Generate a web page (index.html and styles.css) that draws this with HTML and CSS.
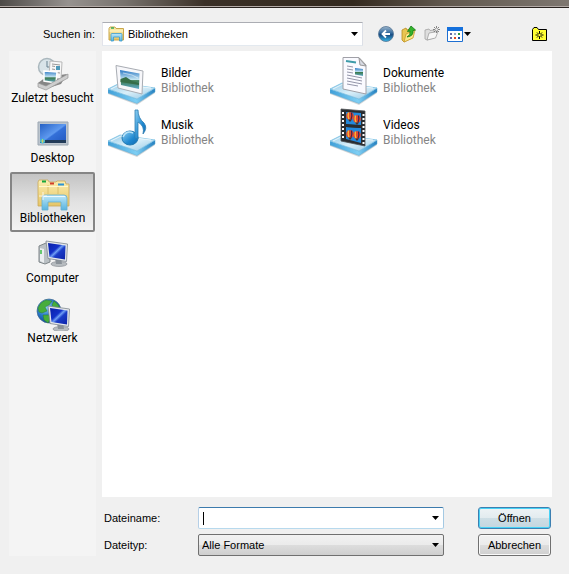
FILE: index.html
```html
<!DOCTYPE html>
<html lang="de">
<head>
<meta charset="utf-8">
<title>Öffnen</title>
<link rel="stylesheet" href="styles.css">
</head>
<body>
<svg class="defs" aria-hidden="true">
  <defs>
    <linearGradient id="plate" x1="0" y1="0" x2="1" y2="1"><stop offset="0" stop-color="#8fc9e8"/><stop offset=".5" stop-color="#d9eff9"/><stop offset="1" stop-color="#92c6e4"/></linearGradient>
    <linearGradient id="edge" x1="0" x2="1"><stop offset="0" stop-color="#3f9fd8"/><stop offset=".6" stop-color="#7fcff4"/><stop offset="1" stop-color="#2580c0"/></linearGradient>
    <linearGradient id="sky" x1="0" y1="0" x2="0" y2="1"><stop offset="0" stop-color="#2b78c4"/><stop offset=".5" stop-color="#c5e5f2"/><stop offset=".56" stop-color="#3d7b50"/><stop offset="1" stop-color="#5faac9"/></linearGradient>
    <linearGradient id="folder" x1="0" y1="0" x2="0" y2="1"><stop offset="0" stop-color="#fbeeb0"/><stop offset="1" stop-color="#e6c566"/></linearGradient>
    <linearGradient id="note" x1="0" y1="0" x2="1" y2="1"><stop offset="0" stop-color="#8fd0f2"/><stop offset=".6" stop-color="#1f88d0"/><stop offset="1" stop-color="#1169b0"/></linearGradient>
    <linearGradient id="screen" x1="0" y1="0" x2="1" y2="1"><stop offset="0" stop-color="#0a1fa8"/><stop offset=".4" stop-color="#1230c8"/><stop offset=".5" stop-color="#6f9ef4"/><stop offset=".6" stop-color="#1a3cc8"/><stop offset="1" stop-color="#0d22a8"/></linearGradient>
    <linearGradient id="desk" x1="0" y1="0" x2="1" y2="1"><stop offset="0" stop-color="#2560c4"/><stop offset=".5" stop-color="#5f9af0"/><stop offset=".55" stop-color="#3470d8"/><stop offset="1" stop-color="#2258c0"/></linearGradient>
    <linearGradient id="glass" x1="0" y1="0" x2="0" y2="1"><stop offset="0" stop-color="#bfe8f8"/><stop offset="1" stop-color="#57b3df"/></linearGradient>
    <radialGradient id="globe" cx=".35" cy=".3" r=".8"><stop offset="0" stop-color="#9fdcf8"/><stop offset=".5" stop-color="#2878c8"/><stop offset="1" stop-color="#0b3c88"/></radialGradient>
    <linearGradient id="back" x1="0" y1="0" x2="0" y2="1"><stop offset="0" stop-color="#9eb6cc"/><stop offset=".45" stop-color="#2f689c"/><stop offset=".55" stop-color="#174a80"/><stop offset="1" stop-color="#38b8ea"/></linearGradient>
    <g id="platform">
      <path d="M0 35 29 46 47 34V37L29 49 0 38Z" fill="#8b8f92" opacity=".35"/>
      <path d="M0 33 29 43 47 32V36L29 47.500 0 37Z" fill="url(#edge)" stroke="#5fa9d0" stroke-width=".5"/>
      <path d="M0 33 12 27 47 32 29 43Z" fill="url(#plate)" stroke="#79bfe2" stroke-width=".8"/>
      <path d="M3 33 13 28 43 32" fill="none" stroke="#fff" opacity=".7"/>
    </g>
    <g id="monitor">
      <ellipse cx="14" cy="23" rx="8" ry="2.500" fill="#b7bcc0" stroke="#81878d" stroke-width=".6"/>
      <path d="M10 17h6l1 6h-6z" fill="#8b9299"/>
      <path d="M1 0 22.500 3 21.500 20.500 3 17.500Z" fill="#e6e9ec" stroke="#7d868f" stroke-width=".8"/>
      <path d="M3 2 20.500 4.500 20 18.500 4.500 16Z" fill="url(#screen)"/>
    </g>
    <g id="balloon"><circle r="3.800" fill="#e8482a"/><path d="M-1.500-3.500Q-2.500 0-1 3.500" stroke="#f7bd3a" stroke-width="1.300" fill="none"/><path d="M1.500-3.500Q2.500 0 1 3.500" stroke="#3b2350" stroke-width="1.200" fill="none"/><path d="M-2 3.500 0 6 2 3.500Z" fill="#522d24"/></g>
  </defs>
</svg>

<div class="frame-edge"></div>
<main class="dialog">
  <header class="lookin">
    <label class="lookin-label" for="folder-select">Suchen in:</label>
    <div class="combo combo-folder">
      <svg class="combo-icon" width="17" height="16" viewBox="0 0 17 16" aria-hidden="true"><path d="M1 2.500 2 1H7L8 2.500H15.500V14H1Z" fill="url(#folder)" stroke="#c9a64a"/><path d="M3 2H6" stroke="#35a853" stroke-width="1.500"/><path d="M1.500 5H15" stroke="#fff6cb"/><path d="M3 15V8.500Q3 7.500 4 7.500H13Q14 7.500 14 8.500V15H11.500V11H5.500V15Z" fill="url(#glass)" stroke="#3a9cd0" stroke-width=".8"/></svg>
      <select id="folder-select"><option>Bibliotheken</option></select>
      <svg class="arrow" width="7" height="4" viewBox="0 0 7 4" aria-hidden="true"><path d="M0 0H7L3.500 4Z"/></svg>
    </div>
    <nav class="toolbar">
      <button type="button" aria-label="Zurück"><svg width="16" height="16" viewBox="0 0 16 16"><circle cx="8" cy="8" r="7.500" fill="url(#back)" stroke="#547392" stroke-width=".8"/><path d="M12 8H5M8 4.500 4.500 8 8 11.500" fill="none" stroke="#fff" stroke-width="1.800"/></svg></button>
      <button type="button" aria-label="Übergeordneter Ordner"><svg width="16" height="18" viewBox="0 0 16 18"><path d="M1 5 5 3 6 5 11 3V13L3 17 1 15Z" fill="#e9c552" stroke="#b88b20" stroke-width=".8"/><path d="M3 17 5 9 14 5 12 13Z" fill="#fbe88b" stroke="#c99c2b" stroke-width=".8"/><path d="M6 12Q10 10 9 6L6.500 6.500 10 1 14.500 5 12 5.500Q13 11 6 12Z" fill="#35b52d" stroke="#147b17" stroke-width=".8"/></svg></button>
      <button type="button" aria-label="Neuer Ordner"><svg width="16" height="16" viewBox="0 0 16 16"><path d="M1 4 5 3 6 4.500 10 4V12L3 14 1 13Z" fill="#dedede" stroke="#a2a2a2" stroke-width=".8"/><path d="M3 14 5 7 14 5.500 11.500 12Z" fill="#f7f7f7" stroke="#a0a0a0" stroke-width=".8"/><path d="M12.500 0V7M9 3.500H16M10 1 15 6M15 1 10 6" stroke="#777" stroke-width=".9"/><circle cx="12.500" cy="3.500" r="1.300" fill="#eee"/></svg></button>
      <button class="views" type="button" aria-label="Ansicht"><svg width="16" height="15" viewBox="0 0 16 15"><path d="M.5.500H15.500V14.500H.5Z" fill="#fff" stroke="#1d6fd2"/><path d="M0 0H16V4H0Z" fill="#1570dc"/><path d="M3 6h2v2H3zM3 10h2v2H3z" fill="#666aa5"/><path d="M7 6h2v2H7z" fill="#8fa5c9"/><path d="M11 6h2v2H11z" fill="#2d9a3b"/><path d="M7 10h2v2H7z" fill="#e44a20"/><path d="M11 10h2v2H11z" fill="#174b9e"/></svg><svg width="7" height="4" viewBox="0 0 7 4"><path d="M0 0H7L3.500 4Z"/></svg></button>
    </nav>
    <button class="create" type="button" aria-label="Ordner erstellen"><svg width="15" height="14" viewBox="0 0 15 14"><path d="M.5 13.500V2.500L2 .5H5L6.500 2.500H14.500V13.500Z" fill="#ff3" stroke="#000"/><path d="M7.500 4V12M3.500 8H11.500M5 5.500 10 10.500M10 5.500 5 10.500" stroke="#000"/><circle cx="7.500" cy="8" r="1.200" fill="#ff3"/></svg></button>
  </header>

  <div class="content">
    <nav class="places">
      <button class="place" type="button"><svg width="34" height="34" viewBox="0 0 34 34"><circle cx="11" cy="10" r="8.500" fill="#d8e4e9" stroke="#aab7bd" stroke-width="1.500"/><path d="M11 4V10H15" fill="none" stroke="#668190"/><path d="M2 26 10 20 31 17 25 27 9 32Z" fill="#858585"/><path d="M14 4 26 5 25 22 13 20Z" fill="#f7f7f7" stroke="#b8b8b8"/><path d="M16 7 24 8M16 9 19 9.500M16 12 19 12.500M16 15 24 16" stroke="#999"/><path d="M20 9h4v4h-4z" fill="#4f99b9"/><path d="M8 14 21 15 20 26 8 24Z" fill="url(#sky)" stroke="#fff" stroke-width="1.500"/><path d="M2 26 10 29 32 17V21L10 33 2 30Z" fill="#cecece" stroke="#969696" stroke-width=".7"/></svg><span>Zuletzt besucht</span></button>
      <button class="place" type="button"><svg width="34" height="34" viewBox="0 0 34 34"><path d="M2 5H32V28H2Z" fill="#bcc5ce" stroke="#9ca7b2"/><path d="M4 7H30V26H4Z" fill="url(#desk)"/><path d="M4 23H30V26H4Z" fill="#223b58"/><circle cx="6.500" cy="24" r="2.500" fill="#36b6df"/><path d="M6.500 22V26M4.500 24H8.500" stroke="#f0d54b" stroke-width=".7"/></svg><span>Desktop</span></button>
      <button class="place selected" type="button" aria-pressed="true"><svg width="34" height="34" viewBox="0 0 34 34"><path d="M2 5 3 3H12L13 5H20L21 4H29L30 7H33V29H2Z" fill="url(#folder)" stroke="#c9a85a" stroke-width=".8"/><path d="M6 4.500H10" stroke="#17a83d" stroke-width="2"/><path d="M14 6.500H18" stroke="#d23e29" stroke-width="2"/><path d="M22 7.500H28" stroke="#2c93d5" stroke-width="2"/><path d="M12 8V17M22 9.500V17" fill="none" stroke="#d4b863" stroke-width=".8"/><path d="M3 9.500H32" stroke="#fff8ce"/><path d="M6 33V21Q6 18 9 18H28Q31 18 31 21V33H25V25H12V33Z" fill="url(#glass)" stroke="#65afd0" stroke-width=".8"/><path d="M8 19.500H29" stroke="#edfaff"/><path d="M7 15V23M3 19H11" stroke="#fff" opacity=".8"/></svg><span>Bibliotheken</span></button>
      <button class="place" type="button"><svg width="34" height="34" viewBox="0 0 34 34"><path d="M3 9 10 6 14 8V25L9 27 3 25Z" fill="#bac0c4" stroke="#7e8589"/><path d="M4 11 8 12V26L4 24Z" fill="#ebeef0"/><path d="M5 13V17" stroke="#3cbd47" stroke-width="1.500"/><use href="#monitor" x="9" y="4"/></svg><span>Computer</span></button>
      <button class="place" type="button"><svg width="34" height="34" viewBox="0 0 34 34"><circle cx="13" cy="14" r="12" fill="url(#globe)" stroke="#43698e" stroke-width=".7"/><path d="M2 11Q4 5 10 3L16 4 13 8 9 10 11 14 6 16 3 15ZM7 18 13 18 15 21 12 26 8 23ZM18 4Q23 7 24 12L19 12 16 8Z" fill="#47ad3c" stroke="#247b36" stroke-width=".5"/><use href="#monitor" x="11" y="9"/></svg><span>Netzwerk</span></button>
    </nav>

    <section class="pane">
      <ul class="files">
        <li class="file"><svg width="48" height="52" viewBox="0 0 48 52" aria-hidden="true"><use href="#platform"/><path d="M8 9.500 35 15 34 38 10 32Z" fill="#f7f7fa" stroke="#a8acb3"/><path d="M12 14 31.500 17.500 31 33 13 29Z" fill="url(#sky)"/><path d="M12.500 23 18 21 24 25 31 27V29L12.500 26Z" fill="#366e48"/><path d="M15 17 24 19 30 22" stroke="#fff" opacity=".5" fill="none"/></svg><div><div>Bilder</div><div class="kind">Bibliothek</div></div></li>
        <li class="file"><svg width="48" height="52" viewBox="0 0 48 52" aria-hidden="true"><use href="#platform"/><path d="M13 1.500 29 1.500 36 9 36 38 13 33Z" fill="#fafaff" stroke="#a0a0a7"/><path d="M29 2 30 9 36 10Z" fill="#d8dbe4" stroke="#999"/><path d="M16 5 26 6.500" stroke="#3d9ba9" stroke-width="2"/><path d="M17 10 23 11M17 13 23 14M17 16 23 17M17 19 32 22M17 22 32 25M17 25 32 28M17 28 28 30" stroke="#9496aa"/><path d="M25 12 33 13V20L25 18.500Z" fill="url(#sky)"/></svg><div><div>Dokumente</div><div class="kind">Bibliothek</div></div></li>
        <li class="file"><svg width="48" height="52" viewBox="0 0 48 52" aria-hidden="true"><use href="#platform"/><ellipse cx="22" cy="30" rx="8" ry="7" fill="url(#note)" stroke="#2379b1"/><path d="M27 30V2H30Q30 10 36 15 40 20 35 26 37 18 30 14V31Z" fill="url(#note)" stroke="#2e7eb1" stroke-width=".8"/><path d="M15 29Q18 22 25 25" fill="none" stroke="#b9e3f8" stroke-width="1.500"/></svg><div><div>Musik</div><div class="kind">Bibliothek</div></div></li>
        <li class="file"><svg width="48" height="52" viewBox="0 0 48 52" aria-hidden="true"><use href="#platform"/><path d="M11 1 35 3 35 38 11 33Z" fill="#292c30" stroke="#4c5053" stroke-width=".8"/><path d="M16 4 31 5 31 17 16 16ZM16 19 31 20 31 35 16 31Z" fill="#2389db"/><use href="#balloon" x="20" y="8"/><use href="#balloon" x="27" y="11"/><use href="#balloon" x="20" y="26"/><use href="#balloon" x="27" y="27"/><path d="M16 16.500 31 17.500V20L16 19Z" fill="#292c30"/><path d="M13 4V32M33.500 6V36" stroke="#fff" stroke-width="2" stroke-dasharray="2 2"/></svg><div><div>Videos</div><div class="kind">Bibliothek</div></div></li>
      </ul>
      <form class="fields">
        <label for="filename">Dateiname:</label>
        <div class="combo combo-name"><input id="filename" type="text" autocomplete="off"><svg class="arrow" width="7" height="4" viewBox="0 0 7 4" aria-hidden="true"><path d="M0 0H7L3.500 4Z"/></svg></div>
        <button class="action default" type="submit">Öffnen</button>
        <label for="filetype">Dateityp:</label>
        <div class="combo combo-type"><select id="filetype"><option>Alle Formate</option></select><svg class="arrow" width="7" height="4" viewBox="0 0 7 4" aria-hidden="true"><path d="M0 0H7L3.500 4Z"/></svg></div>
        <button class="action" type="button">Abbrechen</button>
      </form>
    </section>
  </div>
</main>
</body>
</html>
```
FILE: styles.css
```css
* { box-sizing: border-box; }

body {
  margin: 0;
  min-height: 100vh;
  display: flex;
  flex-direction: column;
  background: #f0f0f0;
  color: #000;
  font: 11px/16px "Liberation Sans", Arial, sans-serif;
}

button, input, select { font: inherit; color: inherit; }
button { padding: 0; border: 0; background: none; }
svg { display: block; flex: none; }
.defs { position: absolute; width: 0; height: 0; }

.frame-edge {
  height: 8px;
  border-bottom: 1px solid #292320;
  background:
    linear-gradient(#b3aaa6, #b3aaa6) bottom / 100% 1px no-repeat,
    linear-gradient(90deg, #4d4a47, #96928f 12%, #77726d 22%, #3a3027 36%, #33291e 62%, #60574d 78%, #7e7770);
}

.dialog {
  flex: 1;
  display: flex;
  flex-direction: column;
  padding: 14px 17px 18px 9px;
}

.lookin { display: flex; align-items: center; margin-bottom: 5px; padding-right: 5px; }
.lookin-label { width: 86px; margin-right: 7px; text-align: right; }

.combo { display: grid; align-items: center; border: 1px solid; }
.combo > * { grid-row: 1; grid-column: 1; }
.combo select, .combo input {
  width: 100%;
  height: 100%;
  border: 0;
  padding: 0 20px 0 3px;
  background: none;
  appearance: none;
  outline: 0;
}
.combo .arrow { justify-self: end; margin-right: 4px; pointer-events: none; }
.combo-folder { flex: 1; height: 24px; background: #fff; border-color: #abadb3 #dcdfe6 #e3e9ef #e2e3ea; }
.combo-folder select { padding-left: 25px; }
.combo-icon { margin-left: 5px; }
.combo-name { background: #fff; border-color: #3d7bad #a4c9e3 #b7d9ed #b5cfe7; border-radius: 2px; }
.combo-name input { background: linear-gradient(#000, #000) 4px center / 1px 13px no-repeat; }
.combo-type { border-color: #707070; border-radius: 2px; background: linear-gradient(#f2f2f2, #ebebeb 50%, #dddddd 50%, #cfcfcf); }

.toolbar { display: flex; align-items: center; gap: 7px; margin: 0 61px 0 15px; }
.views { display: flex; align-items: center; gap: 1px; }

.content { flex: 1; display: flex; gap: 6px; }
.places { width: 87px; padding: 1px; background: #f4f4f4; }
.place {
  display: flex;
  flex-direction: column;
  align-items: center;
  width: 100%;
  height: 60px;
  padding-top: 4px;
  border: 1px solid transparent;
  border-radius: 2px;
  white-space: nowrap;
}
.place.selected { border: 2px solid #858585; padding-top: 3px; background: linear-gradient(#c4c4c4, #e2e2e2 50%, #f2f2f2); }
.place, .files { font: 12px/15px Roboto, "Open Sans", sans-serif; }

.pane { flex: 1; display: flex; flex-direction: column; gap: 10px; }
.files {
  flex: 1;
  display: grid;
  grid-template-columns: 1fr 1fr;
  align-content: start;
  margin: 0;
  padding: 5px 0 0 6px;
  list-style: none;
  background: #fff;
}
.file { display: flex; gap: 5px; height: 52px; }
.file > div { padding-top: 10px; }
.kind { color: #858585; }

.fields {
  display: grid;
  grid-template-columns: 94px 1fr 73px;
  grid-auto-rows: 22px;
  gap: 5px 0;
  align-items: center;
  padding: 0 1px 0 2px;
}
.fields .combo { height: 22px; margin-right: 34px; }
.action {
  height: 22px;
  border: 1px solid #707070;
  border-radius: 3px;
  background: linear-gradient(#f2f2f2, #ebebeb 50%, #dddddd 50%, #cfcfcf);
  box-shadow: inset 0 0 0 1px #fafafa;
}
.action.default {
  border-color: #3c7fb1;
  background: linear-gradient(#eef3f5, #e2ebef 50%, #cedee5 50%, #c4d6df);
  box-shadow: inset 0 0 0 1px #48d2f6;
}
```
